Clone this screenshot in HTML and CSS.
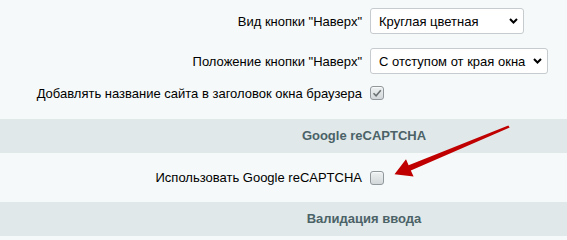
FILE: index.html
```html
<!DOCTYPE html>
<html lang="ru">

<head>
    <meta charset="UTF-8">
    <meta name="viewport" content="width=device-width, initial-scale=1.0">
    <title>Настройки</title>
    <link rel="stylesheet" href="styles.css">
</head>

<body>
    <div class="page">
        <div class="section">
            <div class="row row-first">
                <label class="cell-l" for="up-type">Вид кнопки "Наверх"</label>
                <div class="cell-r">
                    <span class="select-wrap w-short">
                        <select id="up-type">
                            <option>Круглая цветная</option>
                        </select>
                        <svg class="chevron" width="9" height="6" viewBox="0 0 9 6"><path d="M1 1l3.5 3.5L8 1" fill="none" stroke="#000" stroke-width="2"/></svg>
                    </span>
                </div>
            </div>
            <div class="row row-second">
                <label class="cell-l" for="up-pos">Положение кнопки "Наверх"</label>
                <div class="cell-r">
                    <span class="select-wrap w-long">
                        <select id="up-pos">
                            <option>С отступом от края окна</option>
                        </select>
                        <svg class="chevron" width="9" height="6" viewBox="0 0 9 6"><path d="M1 1l3.5 3.5L8 1" fill="none" stroke="#000" stroke-width="2"/></svg>
                    </span>
                </div>
            </div>
            <div class="row row-third">
                <label class="cell-l">Добавлять название сайта в заголовок окна браузера</label>
                <div class="cell-r">
                    <span class="checkbox checked">
                        <svg width="12" height="12" viewBox="0 0 12 12"><path d="M2.5 6.2l2.6 2.6L9.8 3.2" fill="none" stroke="#6b7274" stroke-width="1.6"/></svg>
                    </span>
                </div>
            </div>
        </div>

        <div class="section-head">Google reCAPTCHA</div>
        <div class="section">
            <div class="row row-captcha">
                <label class="cell-l">Использовать Google reCAPTCHA</label>
                <div class="cell-r">
                    <span class="checkbox"></span>
                </div>
            </div>
        </div>

        <div class="section-head">Валидация ввода</div>

        <svg class="arrow" width="567" height="240" viewBox="0 0 567 240">
            <polygon points="508.3,125.4 509.7,127.6 410.8,170.6 413.6,176.6 394.5,174.2 406,159.2 408.6,165.3" fill="#c00000"/>
        </svg>
    </div>
</body>

</html>
```

FILE: styles.css
```css
*,
*::before,
*::after {
    box-sizing: border-box;
}

body {
    margin: 0;
    padding: 0;
    background: #f5f9f9;
    font-family: "Liberation Sans", Arial, sans-serif;
    font-size: 13px;
    color: #000;
    overflow: hidden;
}

.page {
    position: relative;
    width: 728px;
}

.section {
    display: flex;
    flex-direction: column;
}

.section:first-child {
    padding-bottom: 12px;
}

.row {
    display: grid;
    grid-template-columns: 362px auto;
    column-gap: 8px;
    align-items: center;
}

.row-first {
    height: 42px;
}

.row-second {
    height: 38px;
}

.row-third {
    height: 27px;
}

.row-captcha {
    height: 49px;
}

.cell-l {
    text-align: right;
    white-space: nowrap;
}

.cell-r {
    display: flex;
    align-items: center;
}

.section-head {
    height: 34px;
    line-height: 34px;
    background: #e0e8ea;
    color: #4b6267;
    font-weight: bold;
    text-align: center;
}

.select-wrap {
    position: relative;
    display: inline-block;
}

.select-wrap select {
    appearance: none;
    -webkit-appearance: none;
    display: block;
    width: 100%;
    height: 26px;
    margin: 0;
    padding: 0 20px 0 8px;
    border: 1px solid #c5cbce;
    border-radius: 3px;
    background: #fff;
    font-family: "Liberation Sans", Arial, sans-serif;
    font-size: 13px;
    color: #000;
    outline: none;
}

.w-short {
    width: 154px;
}

.w-long {
    width: 178px;
}

.chevron {
    position: absolute;
    right: 6px;
    top: 10px;
    pointer-events: none;
}

.checkbox {
    display: inline-flex;
    align-items: center;
    justify-content: center;
    width: 14px;
    height: 14px;
    border: 1px solid #90989b;
    border-radius: 3px;
    background: linear-gradient(to bottom, #eef1f1, #d2d7d9);
    box-shadow: inset 0 1px 1px rgba(255, 255, 255, 0.7);
}

.row-third .checkbox {
    margin-top: -1px;
}

.arrow {
    position: absolute;
    left: 0;
    top: 0;
    pointer-events: none;
}
```
